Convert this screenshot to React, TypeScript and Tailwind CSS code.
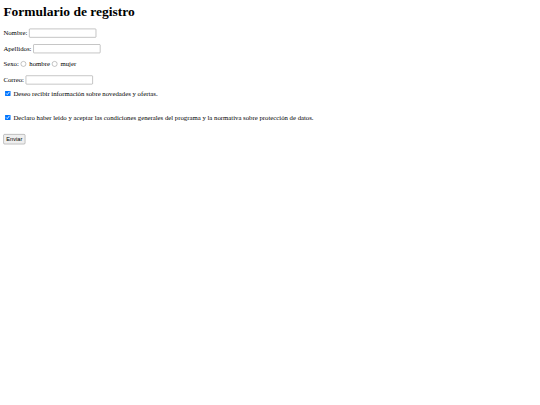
import React from "react";

export default function App() {
  const serif = "font-['Liberation_Serif','Times_New_Roman',serif]";
  const inputCls =
    "inline-block align-baseline w-[159px] h-[21px] border border-[#767676] rounded-[2px] px-[2px] py-[1px] bg-white text-[13.333px] font-['Liberation_Sans',Arial,sans-serif]";
  const radioCls =
    "appearance-none inline-block w-[13px] h-[13px] rounded-full border border-[#767676] bg-white ml-[5px] mr-[3px] mt-[3px] align-[-1px]";
  return (
    <div className="w-[540px] h-[405px] overflow-hidden bg-white">
      <div className={`w-[1280px] origin-top-left scale-[0.421875] px-[8px] pt-[8px] text-[16px] text-black ${serif}`}>
        <h1 className="text-[32px] font-bold leading-[normal] mb-[21.44px]">Formulario de registro</h1>
        <form>
          <p className="my-[13px]">
            Nombre: <input type="text" className={inputCls} />
          </p>
          <p className="my-[13px]">
            Apellidos: <input type="text" className={inputCls} />
          </p>
          <p className="my-[13px]">
            Sexo:
            <input type="radio" name="sexo" className={radioCls} />
            {" "}hombre
            <input type="radio" name="sexo" className={radioCls} />
            {" "}mujer
          </p>
          <p className="mt-[13px] mb-[9.5px]">
            Correo: <input type="email" className={inputCls} />
          </p>
          <p className="mt-[9.5px] mb-[33px]">
            <input type="checkbox" defaultChecked className="ml-[4px] mr-[3px] my-[3px] align-baseline" />
            {" "}Deseo recibir información sobre novedades y ofertas.
          </p>
          <p className="mt-[33px] mb-[13px]">
            <input type="checkbox" defaultChecked className="ml-[4px] mr-[3px] my-[3px] align-baseline" />
            {" "}Declaro haber leído y aceptar las condiciones generales del programa y la normativa sobre protección de datos.
          </p>
          <div className="mt-[25.5px]">
            <button
              type="submit"
              className="bg-[#efefef] border border-[#767676] rounded-[3px] px-[6px] py-[1px] text-[13.333px] text-black font-['Liberation_Sans',Arial,sans-serif]"
            >
              Enviar
            </button>
          </div>
        </form>
      </div>
    </div>
  );
}
